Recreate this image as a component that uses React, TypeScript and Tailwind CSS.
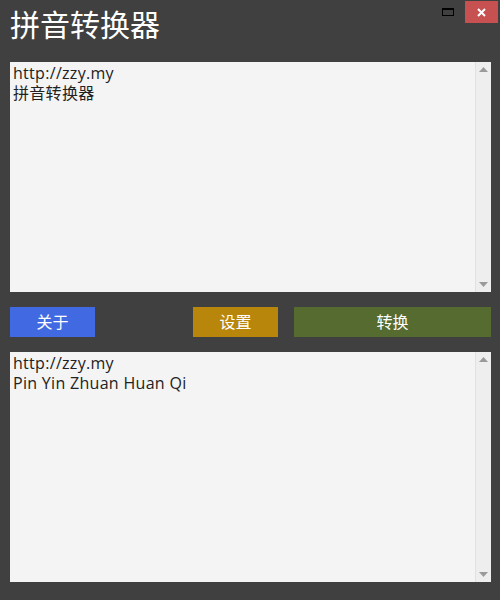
import React from "react";

const font = { fontFamily: '"Open Sans", "Noto Sans CJK SC", sans-serif' };

function ScrollBar() {
  return (
    <div className="flex w-[16px] flex-col items-center justify-between border-l border-[#e2e2e2] bg-[#eeeeee] py-[5px]">
      <svg width="9" height="5" viewBox="0 0 9 5">
        <polygon points="4.5,0 9,5 0,5" fill="#9a9a9a" />
      </svg>
      <svg width="9" height="5" viewBox="0 0 9 5">
        <polygon points="0,0 9,0 4.5,5" fill="#9a9a9a" />
      </svg>
    </div>
  );
}

function TextArea({ lines }: { lines: string[] }) {
  return (
    <div className="flex h-[230px] bg-[#f4f4f4]">
      <div className="flex-1 px-[3px] pt-[1px] text-[16px] leading-[20px] tracking-[0.3px] text-[#222]">
        {lines.map((l, i) => (
          <div key={i}>{l}</div>
        ))}
      </div>
      <ScrollBar />
    </div>
  );
}

export default function App() {
  return (
    <div className="relative h-[600px] w-[500px] bg-[#404040]" style={font}>
      <div className="absolute right-[2px] top-[1px] flex items-start gap-[11px]">
        <div className="mt-[7px] h-[8px] w-[12px] border border-t-2 border-black" />
        <div className="flex h-[22px] w-[33px] items-center justify-center bg-[#c75050]">
          <svg width="9" height="9" viewBox="0 0 9 9">
            <path d="M1 1 L8 8 M8 1 L1 8" stroke="white" strokeWidth="2" />
          </svg>
        </div>
      </div>
      <div className="flex flex-col px-[10px] pr-[9px]">
        <div className="h-[62px] pt-[5px] text-[30px] leading-[40px] text-white">拼音转换器</div>
        <TextArea lines={["http://zzy.my", "拼音转换器"]} />
        <div className="flex h-[60px] items-center">
          <button className="h-[30px] w-[85px] bg-[#4169e1] text-[16px] text-white">关于</button>
          <div className="w-[98px]" />
          <button className="h-[30px] w-[85px] bg-[#b8860b] text-[16px] text-white">设置</button>
          <div className="w-[16px]" />
          <button className="h-[30px] flex-1 bg-[#556b2f] text-[16px] text-white">转换</button>
        </div>
        <TextArea lines={["http://zzy.my", "Pin Yin Zhuan Huan Qi"]} />
      </div>
    </div>
  );
}
